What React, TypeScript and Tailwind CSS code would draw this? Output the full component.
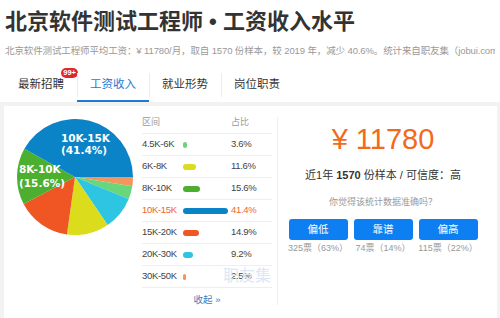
const FONT = "font-['Liberation_Sans','Noto_Sans_CJK_SC',sans-serif]";

type Row = { range: string; pct: number; color: string; hot?: boolean };

const rows: Row[] = [
  { range: "4.5K-6K", pct: 3.6, color: "#68d67a" },
  { range: "6K-8K", pct: 11.6, color: "#dadc1c" },
  { range: "8K-10K", pct: 15.6, color: "#4caf30" },
  { range: "10K-15K", pct: 41.4, color: "#0a84c6", hot: true },
  { range: "15K-20K", pct: 14.9, color: "#ef5624" },
  { range: "20K-30K", pct: 9.2, color: "#2dc5e2" },
  { range: "30K-50K", pct: 2.5, color: "#f3955c" },
];

const votes = [
  { label: "偏低", text: "325票（63%）" },
  { label: "靠谱", text: "74票（14%）" },
  { label: "偏高", text: "115票（22%）" },
];

const tabs = ["最新招聘", "工资收入", "就业形势", "岗位职责"];

function slicePath(cx: number, cy: number, r: number, a0: number, a1: number) {
  const x0 = cx + r * Math.cos(a0);
  const y0 = cy + r * Math.sin(a0);
  const x1 = cx + r * Math.cos(a1);
  const y1 = cy + r * Math.sin(a1);
  const large = a1 - a0 > Math.PI ? 1 : 0;
  return `M${cx} ${cy} L${x0} ${y0} A${r} ${r} 0 ${large} 1 ${x1} ${y1} Z`;
}

function Pie() {
  const sorted = [...rows].sort((a, b) => a.pct - b.pct);
  const total = sorted.reduce((s, r) => s + r.pct, 0);
  let angle = 0;
  return (
    <svg width="116" height="116" viewBox="0 0 116 116">
      {sorted.map((r) => {
        const a0 = angle;
        angle += (r.pct / total) * Math.PI * 2;
        return <path key={r.range} d={slicePath(58, 58, 58, a0, angle)} fill={r.color} />;
      })}
      <g fill="#fff" fontFamily="DejaVu Sans, sans-serif" fontWeight="bold" fontSize="10.5">
        <text x="44" y="23">10K-15K</text>
        <text x="44" y="35">(41.4%)</text>
        <text x="2" y="54">8K-10K</text>
        <text x="2" y="68">(15.6%)</text>
      </g>
    </svg>
  );
}

export default function App() {
  return (
    <div className={`${FONT} w-[500px] h-[318px] overflow-hidden bg-white flex flex-col text-[#333]`}>
      <div className="px-[5px] pt-[8px]">
        <h1 className="text-[22px] leading-[28px] font-bold text-[#333]">北京软件测试工程师 • 工资收入水平</h1>
        <p className="mt-[9px] text-[9.5px] leading-[12px] tracking-[-0.12px] text-[#999] whitespace-nowrap overflow-hidden">
          北京软件测试工程师平均工资：¥ 11780/月，取自 1570 份样本，较 2019 年，减少 40.6%。统计来自职友集（jobui.com）
        </p>
      </div>

      <div className="flex pl-[5px] mt-[12px] h-[33px]">
        {tabs.map((t, i) => (
          <div
            key={t}
            className={`relative w-[72px] flex items-center justify-center text-[11.5px] ${
              i === 1 ? "text-[#1f78d1] border-b-[2px] border-[#1f78d1]" : "text-[#333] border-b-[2px] border-transparent"
            }`}
          >
            {i > 0 && <span className="absolute left-0 top-[4px] bottom-[3px] w-px bg-[#ececec]" />}
            {t}
            {i === 0 && (
              <span className="absolute right-[-1px] top-[-1px] h-[10px] px-[2px] rounded-full bg-[#e2262c] text-white text-[7.5px] leading-[10px] font-bold">
                99+
              </span>
            )}
          </div>
        ))}
      </div>

      <div className="flex-1 bg-[#f2f2f2] pt-[4px] pl-[4px] pr-[3px]">
        <div className="h-full bg-white flex">
          <div className="w-[138px] pl-[13px] pt-[13px]">
            <Pie />
          </div>

          <div className="relative w-[130px] pt-[6px]">
            <div className="flex h-[22px] items-center text-[9px] text-[#999] border-b border-[#eee]">
              <span className="w-[89px]">区间</span>
              <span>占比</span>
            </div>
            {rows.map((r) => (
              <div
                key={r.range}
                className={`flex h-[22px] items-center text-[9.5px] tracking-[-0.3px] border-b border-[#eee] ${
                  r.hot ? "text-[#f0652b]" : "text-[#444]"
                }`}
              >
                <span className="w-[41px]">{r.range}</span>
                <span className="w-[48px]">
                  <span
                    className="block h-[6px] rounded-full"
                    style={{ width: `${Math.max(2, r.pct * 1.09)}px`, backgroundColor: r.color }}
                  />
                </span>
                <span>{r.pct}%</span>
              </div>
            ))}
            <div className="h-[24px] flex items-center justify-center text-[9.5px] text-[#3a7cc2]">收起 »</div>
            <span className="absolute left-[81px] top-[158px] text-[16px] text-[#dae7f5] pointer-events-none">职友集</span>
          </div>

          <div className="ml-[5px] mt-[11px] mb-[13px] w-px bg-[#eee]" />

          <div className="w-[210px] flex flex-col items-center pt-[17px]">
            <div className="text-[29px] leading-[32px] text-[#f26a1b]">¥ 11780</div>
            <div className="mt-[13px] text-[11px] leading-[14px] text-[#333]">
              近1年 <b>1570</b> 份样本 / 可信度：高
            </div>
            <div className="mt-[14px] text-[9px] leading-[12px] text-[#999]">你觉得该统计数据准确吗？</div>
            <div className="mt-[11px] flex gap-[6px]">
              {votes.map((v) => (
                <div key={v.label} className="w-[59px] flex flex-col items-center">
                  <div className="w-full h-[21px] rounded-[3px] bg-[#0e7ff3] text-white text-[10.5px] flex items-center justify-center">
                    {v.label}
                  </div>
                  <div className="mt-[2px] text-[9px] leading-[12px] text-[#999] whitespace-nowrap">{v.text}</div>
                </div>
              ))}
            </div>
          </div>
        </div>
      </div>
    </div>
  );
}
